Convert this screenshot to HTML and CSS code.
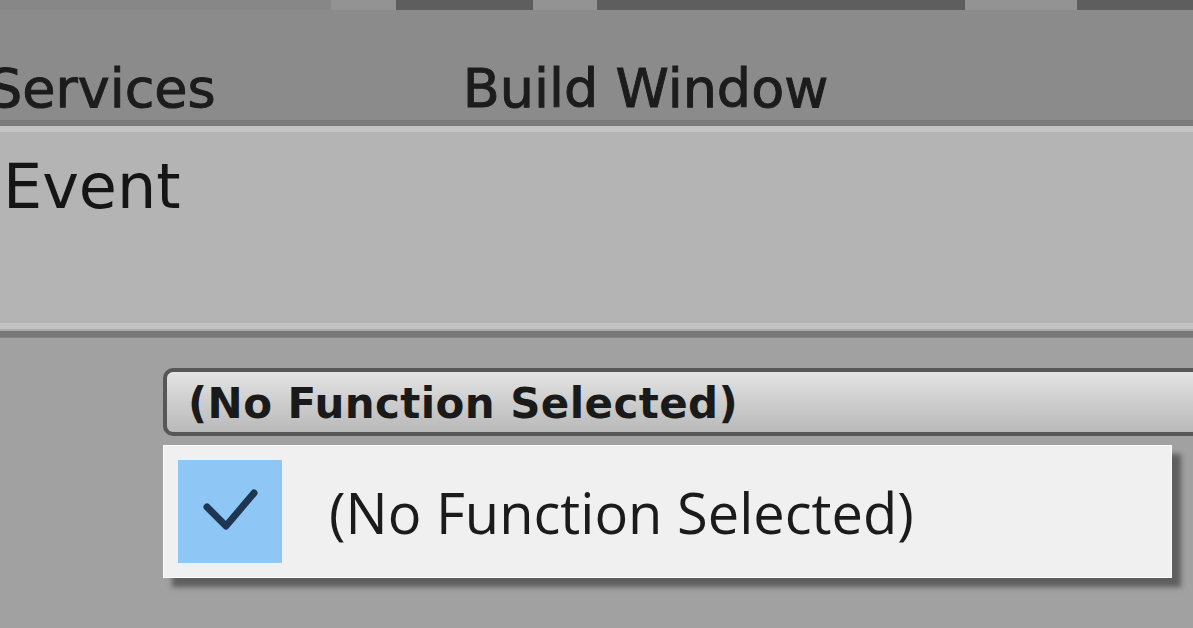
FILE: index.html
```html
<!DOCTYPE html>
<html>
<head>
<meta charset="utf-8">
<link rel="stylesheet" href="styles.css">
</head>
<body>
<div class="screen">
  <div class="strip">
    <div class="seg seg-light" style="width:331px"></div>
    <div class="seg seg-gap" style="width:65px"></div>
    <div class="seg seg-dark" style="width:137px"></div>
    <div class="seg seg-gap" style="width:64px"></div>
    <div class="seg seg-dark" style="width:368px"></div>
    <div class="seg seg-gap" style="width:112px"></div>
    <div class="seg seg-dark seg-fill"></div>
  </div>
  <div class="toolbar">
    <span class="tool tool-first">Services</span>
    <span class="tool tool-build">Build Window</span>
  </div>
  <div class="panel">
    <div class="panel-title">Event</div>
  </div>
  <div class="sep"></div>
  <div class="lower">
    <div class="dropdown">(No Function Selected)</div>
    <div class="menu">
      <div class="menu-item">
        <div class="check">
          <svg width="104" height="103" viewBox="0 0 104 103">
            <polyline points="29,47 48,66 76,33" fill="none" stroke="#1f3652" stroke-width="7" stroke-linecap="round" stroke-linejoin="round"/>
          </svg>
        </div>
        <span class="menu-label">(No Function Selected)</span>
      </div>
    </div>
  </div>
</div>
</body>
</html>
```

FILE: styles.css
```css
html, body {
  margin: 0;
  padding: 0;
}
body {
  width: 1193px;
  height: 628px;
  overflow: hidden;
  background: #a1a1a1;
}
.screen {
  width: 1193px;
  height: 628px;
  overflow: hidden;
  display: flex;
  flex-direction: column;
}
.strip {
  height: 10px;
  display: flex;
  background: #8b8b8b;
  flex: none;
}
.seg {
  height: 10px;
  flex: none;
}
.seg-light { background: #878787; }
.seg-gap { background: #939393; }
.seg-dark { background: #5e5e5e; }
.seg-fill { flex: 1; }

.toolbar {
  height: 116px;
  box-sizing: border-box;
  padding-top: 49px;
  background: #8b8b8b;
  border-bottom: 6px solid #7a7a7a;
  display: flex;
  flex: none;
  font-family: "DejaVu Sans", "Liberation Sans", sans-serif;
  font-size: 54px;
  line-height: 60px;
  color: #1c1c1c;
  white-space: nowrap;
  -webkit-text-stroke: 1px #1c1c1c;
}
.tool-first {
  margin-left: -12px;
}
.tool-build {
  margin-left: 247px;
}
.panel {
  height: 203px;
  box-sizing: border-box;
  flex: none;
  background: #b4b4b4;
  border-top: 6px solid #c4c4c4;
  border-bottom: 6px solid #c3c3c3;
  padding-top: 20px;
  padding-left: 3px;
}
.panel-title {
  font-family: "DejaVu Sans", "Liberation Sans", sans-serif;
  font-size: 62px;
  line-height: 70px;
  color: #151515;
}
.sep {
  height: 9px;
  flex: none;
  background: linear-gradient(#a9a9a9 0, #a9a9a9 2px, #777 2px, #7a7a7a 8px, #939393 9px);
}
.lower {
  flex: 1;
  background: #a1a1a1;
  padding-top: 30px;
  padding-left: 163px;
}
.dropdown {
  width: 1100px;
  height: 68px;
  box-sizing: border-box;
  border: 4px solid #575757;
  border-right: none;
  border-radius: 10px 0 0 10px;
  background: linear-gradient(#e4e4e4, #d2d2d2 40%, #b9b9b9);
  padding-left: 21px;
  padding-top: 4px;
  font-family: "DejaVu Sans", "Liberation Sans", sans-serif;
  font-weight: bold;
  font-size: 42px;
  letter-spacing: 0.4px;
  line-height: 56px;
  color: #1a1a1a;
  white-space: nowrap;
  overflow: hidden;
}
.menu {
  margin-top: 9px;
  width: 1009px;
  height: 133px;
  box-sizing: border-box;
  background: #f0f0f0;
  border: 1px solid #fbfbfb;
  padding: 14px;
  box-shadow: 9px 9px 5px rgba(40, 40, 40, 0.55);
}
.menu-item {
  display: flex;
  align-items: center;
  height: 103px;
}
.check {
  width: 104px;
  height: 103px;
  background: #8ec7f6;
  flex: none;
}
.check svg {
  display: block;
}
.menu-label {
  margin-left: 47px;
  font-family: "Open Sans", "Noto Sans", sans-serif;
  font-size: 56px;
  color: #1b1b1b;
  white-space: nowrap;
}
```
